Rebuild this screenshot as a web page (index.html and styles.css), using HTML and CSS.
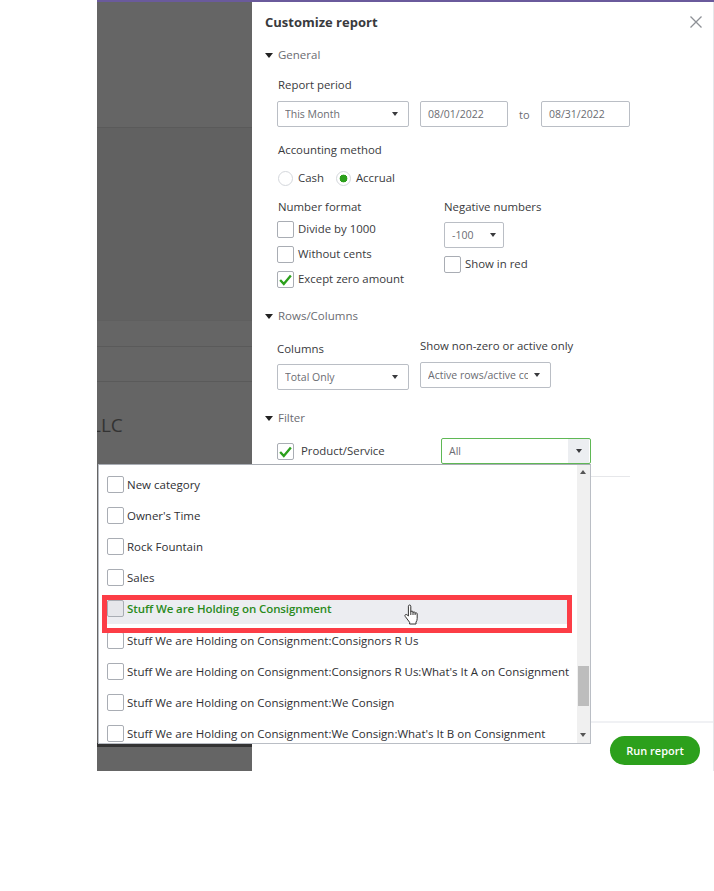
FILE: index.html
```html
<!DOCTYPE html>
<html lang="en">
<head>
<meta charset="utf-8">
<title>Customize report</title>
<link rel="stylesheet" href="styles.css">
</head>
<body>
<main class="stage">
  <div class="topbar"></div>
  <div class="workspace">
    <div class="backdrop">
      <div class="band band-a"></div>
      <div class="band band-b"></div>
      <div class="band band-c"></div>
      <div class="band band-d"></div>
      <div class="company">LLC</div>
      <div class="shade"></div>
    </div>
    <section class="panel">
      <h1 class="title">Customize report</h1>
      <svg class="close" width="12" height="12" viewBox="0 0 12 12"><path d="M.5.5l11 11M11.5.5l-11 11"/></svg>

      <div class="head head-general"><i class="tri"></i>General</div>
      <div class="body">
        <div class="label label-period">Report period</div>
        <div class="row period">
          <div class="select s-wide"><span>This Month</span><i class="caret"></i></div>
          <div class="input">08/01/2022</div>
          <span class="to">to</span>
          <div class="input input-end">08/31/2022</div>
        </div>
        <div class="label label-method">Accounting method</div>
        <div class="row radios">
          <span class="radio"></span><span class="opt">Cash</span>
          <span class="radio on"></span><span class="opt">Accrual</span>
        </div>
        <div class="row numbers">
          <div class="col-num">
            <div class="label label-number">Number format</div>
            <div class="check c-first"><span class="box"></span>Divide by 1000</div>
            <div class="check"><span class="box"></span>Without cents</div>
            <div class="check"><span class="box"><svg class="tick" viewBox="0 0 14 14"><path d="M2 7.5l3.4 3.6L12 3.2"/></svg></span>Except zero amount</div>
          </div>
          <div class="col-neg">
            <div class="label">Negative numbers</div>
            <div class="select s-neg"><span>-100</span><i class="caret"></i></div>
            <div class="check c-red"><span class="box"></span>Show in red</div>
          </div>
        </div>
      </div>

      <div class="head head-rows"><i class="tri"></i>Rows/Columns</div>
      <div class="body">
        <div class="row columns">
          <div class="col-cols">
            <div class="label">Columns</div>
            <div class="select s-wide s-cols"><span>Total Only</span><i class="caret"></i></div>
          </div>
          <div class="col-active">
            <div class="label">Show non-zero or active only</div>
            <div class="select s-active"><span>Active rows/active columns</span><i class="caret"></i></div>
          </div>
        </div>
      </div>

      <div class="head head-filter"><i class="tri"></i>Filter</div>
      <div class="body">
        <div class="row filter">
          <div class="check c-product"><span class="box"><svg class="tick" viewBox="0 0 14 14"><path d="M2 7.5l3.4 3.6L12 3.2"/></svg></span>Product/Service</div>
          <div class="all"><span>All</span><b class="all-btn"><i class="caret"></i></b></div>
        </div>
        <div class="rule"></div>
      </div>

      <footer class="foot"><button class="run" type="button">Run report</button></footer>
    </section>
  </div>

  <div class="dropdown">
    <ul class="list">
      <li><span class="box"></span>New category</li>
      <li><span class="box"></span>Owner's Time</li>
      <li><span class="box"></span>Rock Fountain</li>
      <li><span class="box"></span>Sales</li>
      <li class="hover"><span class="box"></span>Stuff We are Holding on Consignment</li>
      <li><span class="box"></span>Stuff We are Holding on Consignment:Consignors R Us</li>
      <li><span class="box"></span>Stuff We are Holding on Consignment:Consignors R Us:What's It A on Consignment</li>
      <li><span class="box"></span>Stuff We are Holding on Consignment:We Consign</li>
      <li><span class="box"></span>Stuff We are Holding on Consignment:We Consign:What's It B on Consignment</li>
    </ul>
    <div class="scroll">
      <i class="arrow up"></i>
      <i class="thumb"></i>
      <i class="arrow down"></i>
    </div>
  </div>
  <div class="redbox"></div>
  <svg class="hand" width="15" height="21" viewBox="0 0 15 21"><path d="M4.4 12V2.2c0-1.6 2.4-1.6 2.4 0V8c0-1.2 2.2-1.2 2.2 0v.8c0-1.2 2.1-1.2 2.1 0v.8c0-1.1 2.1-1.1 2.1.2v4.7c0 1.6-.5 2.6-1.2 3.6v1.9H5.6v-1.7L1.2 12.4c-1-1.3.8-2.7 1.9-1.5z"/><path d="M6.8 8v3M9 8.8V11M11.1 9.6V11"/></svg>
</main>
</body>
</html>
```
FILE: styles.css
```css
* { box-sizing: border-box; }
html, body { margin: 0; padding: 0; background: #fff; }
body { height: 891px; overflow: hidden; font-family: "Open Sans", "Liberation Sans", sans-serif; font-size: 12px; color: #393a3d; }

.stage { position: relative; width: 617px; height: 771px; margin-left: 97px; display: flex; flex-direction: column; }
.topbar { height: 2px; background: #6a5a9c; flex: none; }
.workspace { flex: 1; display: flex; min-height: 0; }

/* dimmed page behind the panel */
.backdrop { width: 155px; flex: none; background: #656565; overflow: hidden; display: flex; flex-direction: column; }
.band { flex: none; border-bottom: 1px solid #5a5a5a; }
.band-a { height: 126px; background: #656565; }
.band-b { height: 193px; background: #616161; border-bottom-color: #5f5f5f; }
.band-c { height: 26px; background: #656565; }
.band-d { height: 35px; background: #656565; }
.company { margin: 31px 0 0 -6px; font-size: 19px; line-height: 24px; color: #333; }
.shade { flex: none; margin-top: auto; margin-bottom: 24px; height: 4px; background: #333; }

/* panel */
.panel { flex: 1; min-width: 0; position: relative; background: #fff; border-right: 1px solid #e6e7ea; display: flex; flex-direction: column; padding-left: 13px; }
.title { margin: 0; height: 40px; line-height: 40px; font-size: 13px; font-weight: 700; color: #393a3d; }
.close { position: absolute; top: 14px; left: 438px; fill: none; stroke: #8d9096; stroke-width: 1.3; }

.head { height: 20px; line-height: 20px; font-size: 11.5px; color: #6b6c72; display: flex; align-items: center; }
.head-general { margin-top: 3px; }
.head-rows { margin-top: 17px; }
.head-filter { margin-top: 18px; }
.tri { width: 0; height: 0; margin-right: 5px; border: 4px solid transparent; border-top: 5px solid #222; border-bottom: 0; }

.body { padding-left: 12px; }
.label { height: 20px; line-height: 20px; font-size: 11.4px; color: #393a3d; white-space: nowrap; }
.label-period { margin-top: 10px; padding-left: 1px; }
.label-method { margin-top: 13px; padding-left: 1px; }
.label-number { padding-left: 1px; }
.row { display: flex; }

.select, .input { height: 26px; background: #fff; border: 1px solid #babec5; border-radius: 2px; font-size: 10.5px; color: #6b6c72; display: flex; align-items: center; padding: 0 7px; white-space: nowrap; }
.select span { flex: 1; min-width: 0; overflow: hidden; }
.caret { flex: none; width: 0; height: 0; border: 3.5px solid transparent; border-top: 4px solid #393a3d; border-bottom: 0; }
.s-wide { width: 132px; }
.s-wide .caret { margin-right: 3px; }
.period { margin-top: 6px; align-items: center; }
.input { width: 88px; margin-left: 11px; }
.to { width: 33px; padding-left: 11px; font-size: 11px; color: #6b6c72; }
.input-end { width: 89px; margin-left: 0; }

.radios { margin-top: 8px; height: 20px; align-items: flex-start; padding-left: 1px; }
.radio { width: 15px; height: 15px; margin: 3px 5px 0 0; border: 1px solid #d4d7dc; border-radius: 50%; flex: none; background: #fff; }
.radio.on { background: radial-gradient(circle, #2ca01c 0 3.6px, #fff 4.2px); }
.opt { font-size: 11.4px; line-height: 20px; margin-right: 12px; }
.numbers { margin-top: 9px; }
.col-num { width: 167px; }
.check { display: flex; align-items: flex-start; height: 18px; margin-top: 7px; font-size: 11.4px; line-height: 16px; white-space: nowrap; }
.c-first { margin-top: 4px; }
.box { width: 17px; height: 17px; flex: none; margin-right: 4px; border: 1px solid #a9adb4; border-radius: 2px; background: #fff; display: flex; }
.tick { width: 100%; height: 100%; fill: none; stroke: #2ca01c; stroke-width: 2.2; }
.s-neg { width: 60px; margin-top: 5px; }
.c-red { margin-top: 8px; }

.columns { margin-top: 10px; }
.col-cols { width: 143px; padding-top: 3px; }
.s-cols { margin-top: 5px; }
.s-active { width: 131px; margin-top: 6px; }
.s-active span { margin-right: 6px; }
.s-active .caret { margin-right: 3px; }

.filter { margin-top: 10px; height: 26px; align-items: flex-start; }
.c-product { margin: 5px 0 0; width: 164px; line-height: 16px; }
.c-product .box { margin-right: 7px; }
.all { width: 150px; height: 26px; border: 1px solid #5fb855; border-radius: 2px; display: flex; align-items: center; padding-left: 7px; font-size: 10.5px; color: #6b6c72; }
.all span { flex: 1; }
.all-btn { width: 21px; height: 24px; margin-right: 1px; background: #eceef1; display: flex; align-items: center; justify-content: center; }
.rule { margin-top: 12px; height: 1px; width: 353px; background: #e6e7ea; }

.foot { margin: auto 0 0 -13px; height: 50px; border-top: 2px solid #f0f1f4; display: flex; justify-content: flex-end; align-items: flex-start; padding: 13px 13px 0 0; }
.run { width: 90px; height: 29px; border: 0; border-radius: 15px; background: #2ca01c; color: #fff; font: 600 11px "Open Sans", "Liberation Sans", sans-serif; padding: 0; }

/* open product/service list, over the panel */
.dropdown { position: absolute; left: 1px; top: 464px; width: 493px; height: 280px; background: #fff; border: 1px solid #babec5; border-top-color: #a9adb4; display: flex; overflow: hidden; }
.list { flex: 1; min-width: 0; margin: 0; padding: 4px 0 0 4px; list-style: none; }
.list li { height: 31px; display: flex; align-items: center; padding-left: 4px; font-size: 11.5px; font-weight: 500; white-space: nowrap; color: #2f3034; }
.list .box { margin-right: 3px; }
.list li.hover { height: 24px; margin: 7px 0 1px; padding-bottom: 7px; color: #2a8a1c; background: #ecedf1; width: 464px; font-weight: 600; letter-spacing: -0.1px; }
.list li.hover .box { background: #e6e7eb; }
.scroll { width: 13px; flex: none; background: #f0f0f0; position: relative; }
.arrow { position: absolute; left: 3px; width: 0; height: 0; border: 3.5px solid transparent; }
.up { top: 5px; border-bottom: 4px solid #555; border-top: 0; }
.down { bottom: 6px; border-top: 4px solid #555; border-bottom: 0; }
.thumb { position: absolute; top: 201px; left: 1px; width: 11px; height: 40px; background: #bdbdbd; }

.redbox { position: absolute; left: 5px; top: 595px; width: 470px; height: 38px; border: 5px solid #fc3d46; }
.hand { position: absolute; left: 307px; top: 604px; fill: #fff; stroke: #333; stroke-width: 1; stroke-linejoin: round; }
```
